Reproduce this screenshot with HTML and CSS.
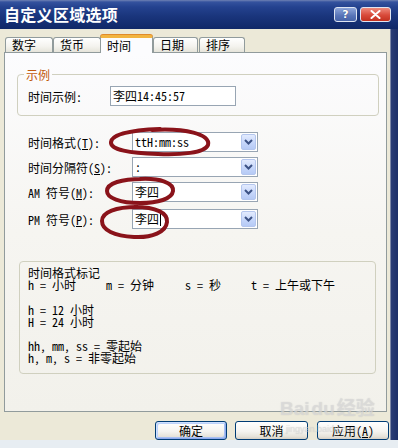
FILE: index.html
```html
<!DOCTYPE html>
<html lang="zh-CN">
<head>
<meta charset="utf-8">
<title>自定义区域选项</title>
<link rel="stylesheet" href="styles.css">
</head>
<body>
<div class="window">
  <div class="titlebar">
    <span class="title">自定义区域选项</span>
    <div class="caption-btns">
      <span class="cbtn help">?</span>
      <span class="cbtn close"><svg width="11" height="9" viewBox="0 0 11 9"><path d="M1.5 1 L9.5 8 M9.5 1 L1.5 8" stroke="#fff" stroke-width="2" stroke-linecap="round"/></svg></span>
    </div>
  </div>
  <div class="frame">
    <div class="client">
      <div class="tabs">
        <span class="tab">数字</span>
        <span class="tab">货币</span>
        <span class="tab sel">时间</span>
        <span class="tab w45">日期</span>
        <span class="tab w46">排序</span>
      </div>
      <div class="panel">
        <fieldset class="group sample">
          <legend>示例</legend>
          <div class="row">
            <span class="lbl-sample">时间示例:</span>
            <div class="textbox">李四14:45:57</div>
          </div>
        </fieldset>
        <div class="fields">
          <div class="row">
            <span class="lbl">时间格式(<u>T</u>):</span>
            <div class="combo"><span class="val">ttH:mm:ss</span><span class="arrow"><svg width="9" height="6" viewBox="0 0 9 6"><path d="M1 1 L4.5 4.5 L8 1" fill="none" stroke="#3c5285" stroke-width="2"/></svg></span></div>
          </div>
          <div class="row">
            <span class="lbl">时间分隔符(<u>S</u>):</span>
            <div class="combo"><span class="val">:</span><span class="arrow"><svg width="9" height="6" viewBox="0 0 9 6"><path d="M1 1 L4.5 4.5 L8 1" fill="none" stroke="#3c5285" stroke-width="2"/></svg></span></div>
          </div>
          <div class="row">
            <span class="lbl">AM 符号(<u>M</u>):</span>
            <div class="combo"><span class="val">李四</span><span class="arrow"><svg width="9" height="6" viewBox="0 0 9 6"><path d="M1 1 L4.5 4.5 L8 1" fill="none" stroke="#3c5285" stroke-width="2"/></svg></span></div>
          </div>
          <div class="row last">
            <span class="lbl">PM 符号(<u>P</u>):</span>
            <div class="combo"><span class="val">李四<span class="caret"></span></span><span class="arrow"><svg width="9" height="6" viewBox="0 0 9 6"><path d="M1 1 L4.5 4.5 L8 1" fill="none" stroke="#3c5285" stroke-width="2"/></svg></span></div>
          </div>
        </div>
        <div class="group notes">
          <div class="para">
            <div class="line">时间格式标记</div>
            <div class="line"><span class="col c1">h = 小时</span><span class="col c2">m = 分钟</span><span class="col c3">s = 秒</span><span class="col">t = 上午或下午</span></div>
          </div>
          <div class="para">
            <div class="line">h = 12 小时</div>
            <div class="line">H = 24 小时</div>
          </div>
          <div class="para">
            <div class="line">hh, mm, ss = 零起始</div>
            <div class="line">h, m, s = 非零起始</div>
          </div>
        </div>
      </div>
      <div class="buttons">
        <span class="btn default">确定</span>
        <span class="btn cancel">取消</span>
        <span class="btn apply">应用(<u>A</u>)</span>
      </div>
    </div>
    <div class="frame-right"></div>
  </div>
  <div class="frame-bottom"></div>

  <svg class="annot" width="398" height="448" viewBox="0 0 398 448">
    <g fill="none" stroke="#8a131a" stroke-width="4" stroke-linecap="round">
      <path d="M152 130 C185 128 211 134 208 145 C205 153 180 155 158 154 C130 153 110 150 111 142 C112 134 132 130 160 129"/>
      <path d="M140 179 C160 178 174 183 173 191 C172 199 158 203 140 203 C120 203 107 198 107 191 C107 183 122 179 142 179"/>
      <path d="M135 207 C156 207 168 213 167 222 C166 232 152 238 134 237 C114 236 102 230 102 221 C102 212 116 207 137 207"/>
    </g>
  </svg>

  <div class="watermark">
    <div class="wm-main">Bai<span class="wm-du">du</span>经验</div>
    <div class="wm-url">jingyan.baidu.com</div>
  </div>
</div>
</body>
</html>
```

FILE: styles.css
```css
* { box-sizing: border-box; }

body {
  margin: 0;
  background: #ece9d8;
  font-family: "Noto Sans Mono CJK SC", "Noto Sans CJK SC", monospace;
  font-size: 12px;
  color: #000;
}

.window {
  width: 398px;
  height: 448px;
  position: relative;
  overflow: hidden;
  display: flex;
  flex-direction: column;
  background: #ece9d8;
}

/* title bar */
.titlebar {
  height: 29px;
  flex: none;
  display: flex;
  justify-content: space-between;
  align-items: flex-start;
  padding: 0 7px 0 4px;
  background: linear-gradient(#6f82b4 0px, #34529e 2px, #24428f 7px, #1a357c 16px, #102868 29px);
}
.title {
  color: #fff;
  font-family: "Noto Sans CJK SC", sans-serif;
  font-weight: bold;
  font-size: 16px;
  line-height: 29px;
  letter-spacing: 0.3px;
}
.caption-btns {
  display: flex;
  gap: 3px;
  margin-top: 7px;
}
.cbtn {
  height: 15px;
  border: 1px solid #dfe5f2;
  border-radius: 3px;
  display: flex;
  align-items: center;
  justify-content: center;
}
.help {
  width: 23px;
  background: linear-gradient(#8ea6da, #5874b8 60%, #4663a8);
  color: #fff;
  font-family: "DejaVu Sans", sans-serif;
  font-weight: bold;
  font-size: 11px;
  line-height: 13px;
  text-shadow: 0 0 1px #1c2f68;
}
.close {
  width: 31px;
  background: linear-gradient(#ee8a7c, #d84a3a 55%, #c2301f);
}

/* frame */
.frame {
  flex: 1;
  display: flex;
}
.client {
  width: 390px;
  display: flex;
  flex-direction: column;
}
.frame-right {
  flex: 1;
  background: linear-gradient(90deg, #7b86a6 0, #7b86a6 1px, #2a3d76 1px, #1c2f68);
}
.frame-bottom {
  height: 8px;
  flex: none;
  background: #e7edf2;
}

/* tabs */
.tabs {
  height: 23px;
  display: flex;
  align-items: flex-end;
  padding-left: 5px;
}
.tab {
  width: 48px;
  height: 15px;
  border: 1px solid #919b9c;
  border-bottom: none;
  border-radius: 3px 3px 0 0;
  background: linear-gradient(#ffffff, #f4f3ee 60%, #e6e4da);
  padding-left: 6px;
  line-height: 14px;
}
.tab.w45 { width: 45px; }
.tab.w46 { width: 46px; margin-left: 1px; }
.tab.sel {
  width: 53px;
  height: 18px;
  margin-left: -1px;
  margin-bottom: -1px;
  position: relative;
  z-index: 1;
  background: #fcfcfe;
  border-top: 3px solid #f2b440;
  box-shadow: 0 -1px 0 #e08a2c;
  line-height: 15px;
}

/* panel */
.panel {
  height: 360px;
  width: 383px;
  margin-left: 4px;
  border: 1px solid #919b9c;
  background: linear-gradient(#fcfcfe, #f6f5f1 50%, #f2f1eb);
  padding-top: 14px;
}

.group {
  border: 1px solid #d0d0bf;
  border-radius: 4px;
}
fieldset.sample {
  margin: 0 0 0 12px;
  width: 362px;
  padding: 4px 9px 9px 10px;
  min-width: 0;
}
fieldset.sample legend {
  padding: 0 2px;
  margin-left: -4px;
  color: #c25a0e;
  line-height: 15px;
  font-size: 12px;
}

.row {
  display: flex;
  align-items: center;
  height: 20px;
}
.lbl-sample {
  width: 82px;
}
.textbox {
  width: 126px;
  height: 20px;
  border: 1px solid #98a5b3;
  background: #fff;
  padding-left: 2px;
  line-height: 18px;
}

.fields {
  margin-top: 16px;
  padding-left: 23px;
  display: flex;
  flex-direction: column;
  gap: 5px;
}
.fields .row.last { margin-top: 2px; }
.lbl {
  width: 104px;
}
.combo {
  width: 126px;
  height: 20px;
  border: 1px solid #98a5b3;
  background: #fff;
  display: flex;
  align-items: center;
}
.combo .val {
  flex: 1;
  padding-left: 2px;
  line-height: 18px;
  display: flex;
  align-items: center;
}
.caret {
  display: inline-block;
  width: 1px;
  height: 14px;
  background: #000;
  margin-left: 1px;
}
.arrow {
  width: 15px;
  height: 16px;
  margin-right: 1px;
  border: 1px solid #b4c6ee;
  border-radius: 2px;
  background: linear-gradient(#e3ebfe, #c4d5fa 60%, #b6caf5);
  display: flex;
  align-items: center;
  justify-content: center;
}

/* format notes */
.notes {
  margin: 32px 0 0 14px;
  width: 357px;
  height: 113px;
  padding: 5px 0 0 8px;
}
.para + .para { margin-top: 12.2px; }
.line {
  line-height: 12.2px;
  white-space: nowrap;
}
.col { display: inline-block; }
.c1 { width: 78px; }
.c2 { width: 79px; }
.c3 { width: 66px; }

/* buttons */
.buttons {
  margin-top: 9px;
  height: 19px;
  display: flex;
  justify-content: flex-end;
  padding-right: 1px;
}
.btn {
  height: 19px;
  border: 1px solid #003c74;
  border-radius: 3px;
  background: linear-gradient(#ffffff, #f5f4f0 55%, #e6e3da 85%, #d6d0c5);
  text-align: center;
  line-height: 17px;
}
.btn.default {
  width: 72px;
  box-shadow: inset 1px 1px 0 #cee0ff, inset -1px -1px 0 #8eaaec, inset 2px 2px 0 #bcd2fb, inset -2px -2px 0 #a8c0f2;
}
.btn.cancel { width: 73px; margin-left: 8px; }
.btn.apply { width: 72px; margin-left: 9px; }

/* annotations */
.annot {
  position: absolute;
  left: 0;
  top: 0;
  pointer-events: none;
}

.watermark {
  position: absolute;
  left: 280px;
  top: 398px;
  color: rgba(225, 225, 225, 0.6);
  text-shadow: 0 0 1px rgba(140, 140, 140, 0.35);
  pointer-events: none;
}
.wm-main {
  font-family: "Liberation Sans", "Noto Sans CJK SC", sans-serif;
  font-weight: bold;
  font-size: 19px;
  line-height: 22px;
}
.wm-du { margin-left: 2px; margin-right: 2px; }
.wm-url {
  font-family: "Liberation Sans", sans-serif;
  font-size: 9px;
  line-height: 10px;
  margin-left: 6px;
  margin-top: 4px;
}
```
